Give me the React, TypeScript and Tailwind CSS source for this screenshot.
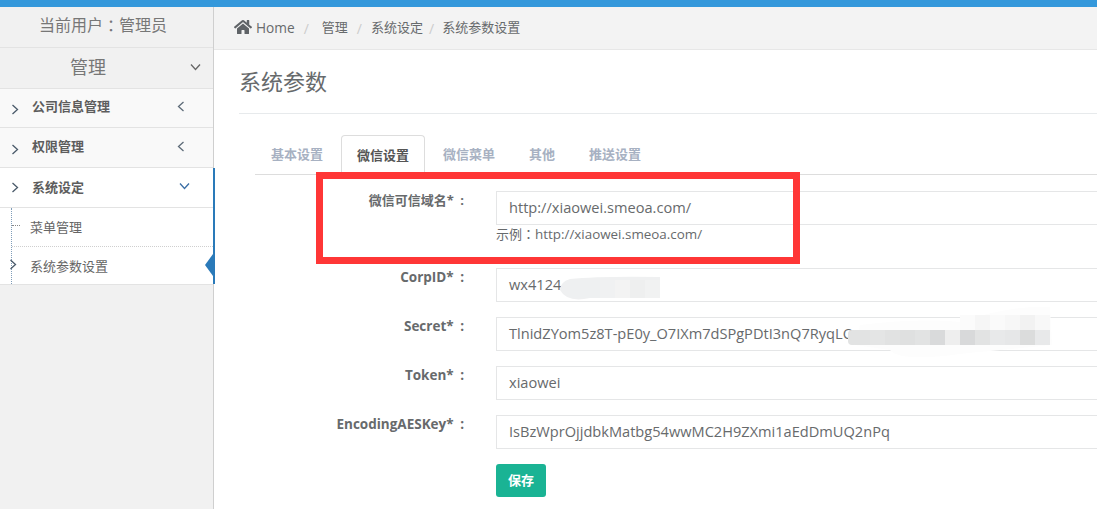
import { FaHome } from "react-icons/fa";

const font = "font-['Open_Sans','Noto_Sans_CJK_SC',sans-serif]";
const tcColon = "font-['Noto_Sans_CJK_TC',sans-serif]";

function Chevron({ dir, className }: { dir: "left" | "right" | "down"; className?: string }) {
  const d = {
    right: "M1.5 1 L6.5 5.5 L1.5 10",
    left: "M6.5 1 L1.5 5.5 L6.5 10",
    down: "M1 1.5 L5.5 6.5 L10 1.5",
  }[dir];
  const w = dir === "down" ? 11 : 8;
  const h = dir === "down" ? 8 : 11;
  return (
    <svg width={w} height={h} viewBox={`0 0 ${w} ${h}`} fill="none" stroke="currentColor" strokeWidth="1.3" className={className}>
      <path d={d} />
    </svg>
  );
}

function NavItem({ label, h }: { label: string; h: string }) {
  return (
    <div className={`flex ${h} items-center border-b border-[#e3e3e3] bg-[#f9f9f9]`}>
      <Chevron dir="right" className="ml-[11px] mt-[3px] shrink-0 text-[#4a5a6a]" />
      <span className="ml-[13px] flex-1 pb-[2px] text-[13px] font-bold text-[#5d5d5d]">{label}</span>
      <Chevron dir="left" className="mb-[3px] mr-[28px] shrink-0 text-[#5d6b78]" />
    </div>
  );
}

function Field({ label, value, className, hint, labelSize }: { label: string; value: string; className?: string; hint?: boolean; labelSize: string }) {
  return (
    <div className={`flex ${className ?? ""}`}>
      <div className={`w-[250px] shrink-0 text-right ${labelSize} font-bold leading-[18px] text-[#676a6c]`}>
        {label}*<span className="ml-[3px]"> :</span>
      </div>
      <div className="ml-[32px] w-[700px] shrink-0">
        <div className="flex h-[34px] items-center border border-[#e5e6e7] bg-white pb-[1px] pl-[12px] text-[14.6px] text-[#676a6c]">
          {value}
        </div>
        {hint && (
          <div className="text-[13px] leading-[18px] text-[#676a6c]">
            示例<span className={tcColon}>：</span>
            <span className="text-[13.4px]">http://xiaowei.smeoa.com/</span>
          </div>
        )}
      </div>
    </div>
  );
}

const secretTiles = ["#e2e3e3", "#e4e5e5", "#e1e2e2", "#dfe0e0", "#e2e3e3", "#d9dadb", "#eeeeee", "#d8d9da", "#e2e3e3", "#e8e9ea", "#e6e7e8", "#dbdcdc", "#e8e9ea"];
const secretUpper = ["#fbfbfb", "#f6f6f6", "#fafafa", "#f7f7f7", "#f2f2f2", "#f8f8f8"];
const corpTiles = ["#eef0f1", "#eef0f1", "#f0f1f2", "#f3f3f3", "#eeefef", "#f1f2f2"];

export default function App() {
  return (
    <div className={`${font} flex h-[509px] w-[1097px] flex-col overflow-hidden bg-white text-[#676a6c]`}>
      <div className="h-[7px] shrink-0 bg-[#3498db]" />
      <div className="flex min-h-0 flex-1">
        <aside className="w-[214px] shrink-0 border-r border-[#cfcfcf] bg-[#f1f1f1]">
          <div className="flex h-[41px] items-center justify-center border-b border-[#e3e3e3] pb-[4px] pr-[7px] text-[16px] text-[#777]">
            当前用户<span className={tcColon}>：</span>管理员
          </div>
          <div className="relative flex h-[41px] items-center justify-center border-b border-[#e3e3e3] pb-[1px] pr-[37px] text-[18px] text-[#777]">
            管理
            <Chevron dir="down" className="absolute right-[12px] top-[15px] text-[#666]" />
          </div>
          <NavItem label="公司信息管理" h="h-[39px]" />
          <NavItem label="权限管理" h="h-[40px]" />
          <div className="relative z-10 w-[215px] border-r-2 border-[#2a7ab9] bg-white">
            <div className="flex h-[40px] items-center border-b border-[#e3e3e3]">
              <Chevron dir="right" className="ml-[11px] shrink-0 text-[#4a5a6a]" />
              <span className="ml-[13px] flex-1 text-[13px] font-bold text-[#5d5d5d]">系统设定</span>
              <Chevron dir="down" className="mb-[4px] mr-[23px] shrink-0 text-[#3a6ea5]" />
            </div>
            <div className="relative ml-[11px] border-l border-dotted border-[#7f9db9]">
              <div className="relative flex h-[39px] items-center border-b border-dotted border-[#cfcfcf] pl-[18px] pt-[2px] text-[13px] text-[#666]">
                <span className="absolute left-0 top-[17px] w-[8px] border-t border-dotted border-[#888]" />
                菜单管理
              </div>
              <div className="relative flex h-[37px] items-center pl-[18px] pt-[2px] text-[13px] text-[#666]">
                <Chevron dir="right" className="absolute -left-[3px] top-[12px] text-[#4a5a6a]" />
                系统参数设置
                <span className="absolute right-0 top-[7px] h-0 w-0 border-y-[11px] border-r-[8px] border-y-transparent border-r-[#2a7ab9]" />
              </div>
            </div>
          </div>
          <div className="w-[213px] border-t border-[#e3e3e3]" />
        </aside>

        <main className="relative min-w-0 flex-1 overflow-hidden">
          <div className="flex h-[43px] items-center border-b border-[#e7e7e7] bg-[#f3f3f3] pl-[20px] text-[13px] text-[#676a6c]">
            <FaHome size={18} className="mb-[3px] text-[#5f6367]" />
            <span className="ml-[4px] text-[13.7px]">Home</span>
            <span className="ml-[9px] text-[14px] text-[#ccc]">/</span>
            <span className="ml-[13px]">管理</span>
            <span className="ml-[9px] text-[14px] text-[#ccc]">/</span>
            <span className="ml-[9px]">系统设定</span>
            <span className="ml-[6px] text-[14px] text-[#ccc]">/</span>
            <span className="ml-[8px]">系统参数设置</span>
          </div>

          <div className="ml-[25px] flex h-[64px] items-center border-b border-[#e7eaec] text-[22px] text-[#676a6c]">
            系统参数
          </div>

          <div className="ml-[41px] mt-[21px] flex h-[40px] border-b border-[#dddddd] text-[13px] font-bold text-[#a7b1c2]">
            <div className="ml-[16px] flex items-center">基本设置</div>
            <div className="relative ml-[18px] flex h-[40px] w-[84px] items-center justify-center rounded-t-[4px] border border-b-0 border-[#dddddd] bg-white text-[#555]">
              微信设置
            </div>
            <div className="ml-[18px] flex items-center">微信菜单</div>
            <div className="ml-[34px] flex items-center">其他</div>
            <div className="ml-[34px] flex items-center">推送设置</div>
          </div>

          <div className="mt-[16px]">
            <Field label="微信可信域名" labelSize="text-[13px]" value="http://xiaowei.smeoa.com/" hint />
            <Field label="CorpID" labelSize="text-[13.5px]" value="wx4124" className="mt-[25px]" />
            <Field label="Secret" labelSize="text-[13.5px]" value="TlnidZYom5z8T-pE0y_O7IXm7dSPgPDtI3nQ7RyqLQ" className="mt-[15px]" />
            <Field label="Token" labelSize="text-[13.5px]" value="xiaowei" className="mt-[15px]" />
            <Field label="EncodingAESKey" labelSize="text-[13.5px]" value="IsBzWprOjjdbkMatbg54wwMC2H9ZXmi1aEdDmUQ2nPq" className="mt-[15px]" />
            <div className="ml-[282px] mt-[15px] flex h-[33px] w-[50px] items-center justify-center rounded-[3px] bg-[#1ab394] text-[13px] font-bold text-white">
              保存
            </div>
          </div>

          <div className="absolute left-[102px] top-[165px] h-[92px] w-[484px] border-[7px] border-[#ff3636]" />

          <svg className="absolute left-0 top-0" width="883" height="502" viewBox="214 7 883 502">
            <path d="M570 279 Q600 276 660 277 L660 298 L590 298 Q567 303 560 290 Q560 282 570 279 Z" fill="#eff0f1" />
            {corpTiles.map((c, i) => (
              <rect key={i} x={570 + i * 15} y={280} width={15} height={18} fill={c} />
            ))}
            <path d="M860 325 Q920 318 960 322 Q1010 305 1050 307 L1052 345 Q1000 350 960 354 Q900 362 890 350 L855 345 Z" fill="#fdfdfd" />
            {secretUpper.map((c, i) => (
              <rect key={i} x={960 + i * 15} y={315} width={15} height={15} fill={c} />
            ))}
            <rect x={848} y={330} width={10} height={15} rx={4} fill="#e2e3e3" />
            {secretTiles.map((c, i) => (
              <rect key={i} x={855 + i * 15} y={330} width={15} height={15} fill={c} />
            ))}
          </svg>
        </main>
      </div>
    </div>
  );
}
